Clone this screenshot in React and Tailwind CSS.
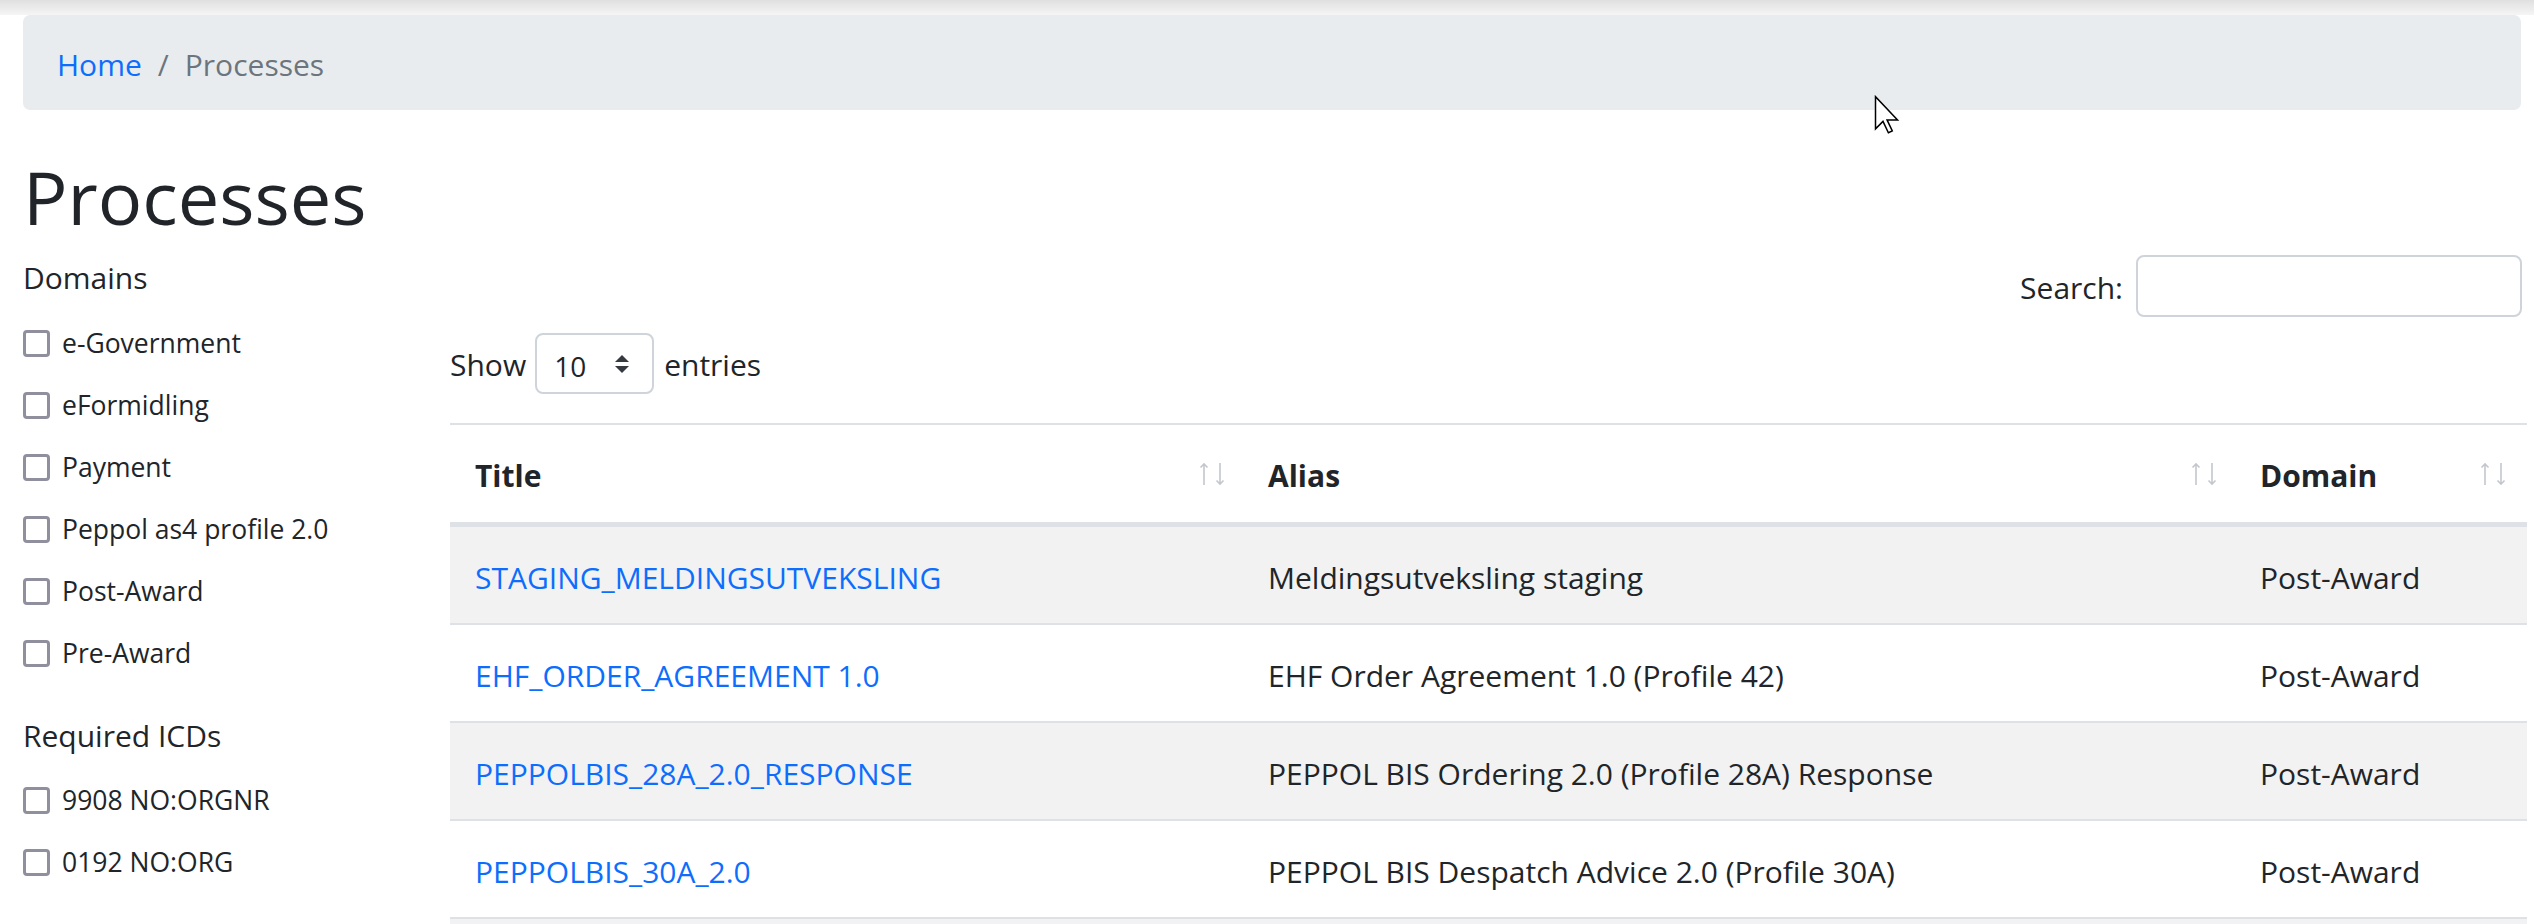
import React from "react";

const domains = ["e-Government", "eFormidling", "Payment", "Peppol as4 profile 2.0", "Post-Award", "Pre-Award"];
const icds = ["9908 NO:ORGNR", "0192 NO:ORG"];

const rows = [
  { title: "STAGING_MELDINGSUTVEKSLING", alias: "Meldingsutveksling staging", domain: "Post-Award" },
  { title: "EHF_ORDER_AGREEMENT 1.0", alias: "EHF Order Agreement 1.0 (Profile 42)", domain: "Post-Award" },
  { title: "PEPPOLBIS_28A_2.0_RESPONSE", alias: "PEPPOL BIS Ordering 2.0 (Profile 28A) Response", domain: "Post-Award" },
  { title: "PEPPOLBIS_30A_2.0", alias: "PEPPOL BIS Despatch Advice 2.0 (Profile 30A)", domain: "Post-Award" },
];

function SortIcon() {
  return (
    <svg width="26" height="24" viewBox="0 0 26 24" fill="none" stroke="#c3c7cd" strokeWidth="1.6">
      <path d="M5 23V2M1.5 5.5L5 2l3.5 3.5" />
      <path d="M21 1v21M17.5 18.5L21 22l3.5-3.5" />
    </svg>
  );
}

function Check({ label }) {
  return (
    <label className="flex h-[62px] items-center gap-[12px]">
      <span className="h-[27px] w-[27px] shrink-0 rounded-[4px] border-[3px] border-[#8f8f9d] bg-white" />
      <span className="pt-[2px] text-[26.5px] text-[#212529]">{label}</span>
    </label>
  );
}

function HeaderCell({ children, pr = "pr-[18px]" }) {
  return (
    <div className={`flex items-center justify-between pl-[25px] ${pr}`}>
      <span className="pt-[4px] text-[30px] font-bold text-[#212529]">{children}</span>
      <SortIcon />
    </div>
  );
}

export default function App() {
  return (
    <div className="relative min-h-screen bg-white font-['Open_Sans',sans-serif] text-[#212529]">
      <div className="h-[15px] bg-linear-to-b from-[#e0e0e0] to-[#f5f5f5]" />

      <div className="pl-[23px] pr-[7px]">
        <nav className="mr-[6px] flex h-[95px] items-center rounded-[7px] bg-[#e9ecef] pl-[34px] pt-[4px] text-[30px]">
          <a className="text-[#0d6efd]">Home</a>
          <span className="px-[16px] text-[#6c757d]">/</span>
          <span className="text-[#6c757d]">Processes</span>
        </nav>

        <h1 className="mt-[42px] h-[89px] text-[74px] leading-[89px] font-normal">Processes</h1>

        <div className="flex pt-[14px]">
          <aside className="w-[427px] shrink-0">
            <div className="h-[45px] text-[30px] leading-[45px]">Domains</div>
            <div className="mt-[12px]">
              {domains.map(d => (
                <Check key={d} label={d} />
              ))}
            </div>
            <div className="mt-[28px] h-[45px] pt-[1px] text-[30px] leading-[45px]">Required ICDs</div>
            <div className="mt-[12px]">
              {icds.map(d => (
                <Check key={d} label={d} />
              ))}
            </div>
          </aside>

          <main className="flex-1">
            <div className="flex items-center justify-end gap-[13px] pr-[5px]">
              <span className="pt-[2px] text-[30px]">Search:</span>
              <input className="h-[62px] w-[386px] rounded-[8px] border-2 border-[#ced4da] bg-white" />
            </div>

            <div className="mt-[16px] flex h-[61px] items-center text-[30px]">
              <span className="pt-[2px]">Show</span>
              <div className="ml-[9px] flex h-[61px] w-[119px] items-center justify-between rounded-[8px] border-2 border-[#ced4da] pl-[17px] pr-[22px]">
                <span className="pt-[4px] text-[28px]">10</span>
                <svg width="16" height="20" viewBox="0 0 16 20" fill="#343a40">
                  <path d="M1 8L8 1l7 7z" />
                  <path d="M1 12h14l-7 7z" />
                </svg>
              </div>
              <span className="ml-[10px] pt-[2px]">entries</span>
            </div>

            <div className="mt-[29px] border-t-2 border-[#dee2e6]">
              <div className="grid h-[102px] grid-cols-[793px_992px_1fr] border-b-[5px] border-[#dee2e6]">
                <HeaderCell>Title</HeaderCell>
                <HeaderCell>Alias</HeaderCell>
                <HeaderCell pr="pr-[21px]">Domain</HeaderCell>
              </div>
              {rows.map((r, i) => (
                <div
                  key={r.title}
                  className={`grid h-[98px] grid-cols-[793px_992px_1fr] items-center border-b-2 border-[#dee2e6] pt-[4px] text-[30px] ${i % 2 === 0 ? "bg-[#f2f2f2]" : "bg-white"}`}
                >
                  <a className="pl-[25px] text-[#0d6efd]">{r.title}</a>
                  <span className="pl-[25px]">{r.alias}</span>
                  <span className="pl-[25px]">{r.domain}</span>
                </div>
              ))}
              <div className="h-[98px] bg-[#f2f2f2]" />
            </div>
          </main>
        </div>
      </div>

      <svg className="absolute left-[1874px] top-[95px]" width="27" height="40" viewBox="0 0 18 26.5">
        <path d="M1 1v21.5l5-5 3.6 7.6 2.6-1.2-3.5-7.4h7z" fill="#fff" stroke="#000" strokeWidth="1" strokeLinejoin="miter" />
      </svg>
    </div>
  );
}
